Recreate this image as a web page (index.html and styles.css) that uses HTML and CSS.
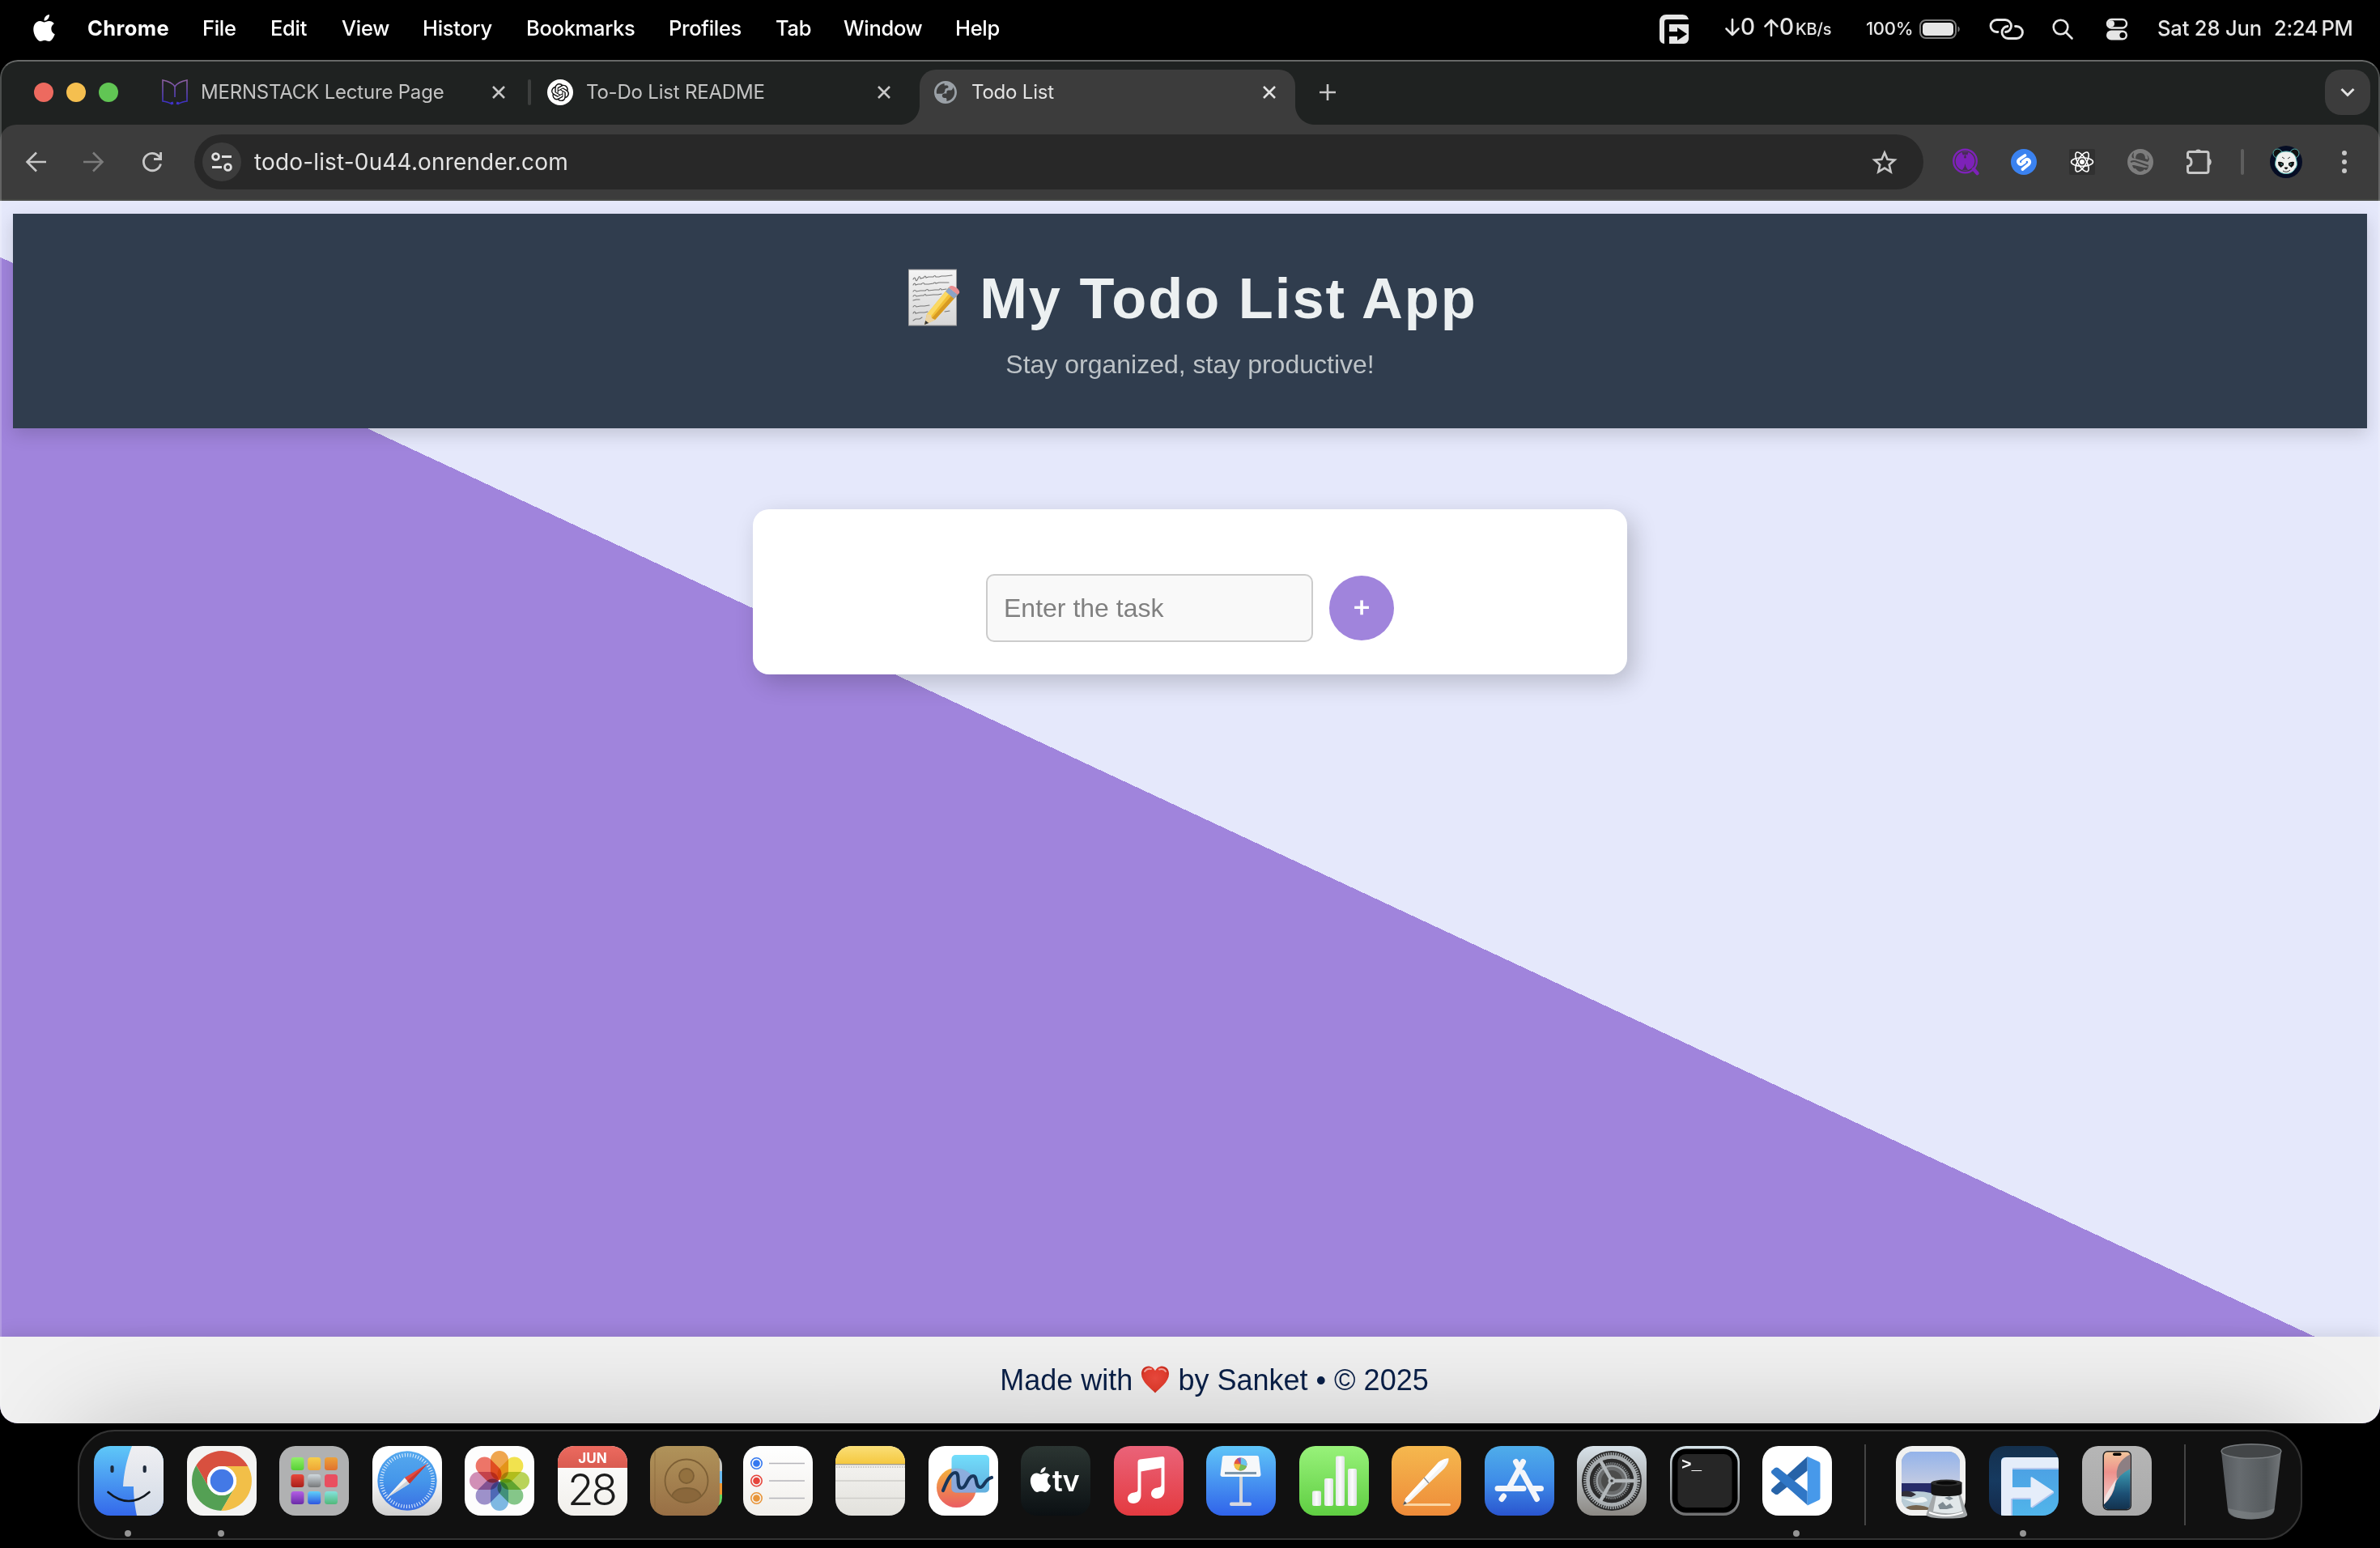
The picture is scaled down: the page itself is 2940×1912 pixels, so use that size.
FILE: index.html
```html
<!DOCTYPE html>
<html lang="en">
<head>
<meta charset="utf-8">
<title>Todo List</title>
<link rel="stylesheet" href="styles.css">
</head>
<body>
<svg class="defs" width="0" height="0" aria-hidden="true">
  <defs>
    <path id="apple" d="M12.152 6.896c-.948 0-2.415-1.078-3.96-1.04-2.04.027-3.91 1.183-4.961 3.014-2.117 3.675-.546 9.103 1.519 12.09 1.013 1.454 2.208 3.09 3.792 3.039 1.52-.065 2.09-.987 3.935-.987 1.831 0 2.35.987 3.96.948 1.637-.026 2.676-1.48 3.676-2.948 1.156-1.688 1.636-3.325 1.662-3.415-.039-.013-3.182-1.221-3.22-4.857-.026-3.04 2.48-4.494 2.597-4.559-1.429-2.09-3.623-2.324-4.39-2.376-2-.156-3.675 1.09-4.61 1.09zM15.53 3.83c.843-1.012 1.4-2.427 1.245-3.83-1.207.052-2.662.805-3.532 1.818-.78.896-1.454 2.338-1.273 3.714 1.338.104 2.715-.688 3.559-1.701"/>
    <clipPath id="tile"><rect width="86" height="86" rx="20"/></clipPath>
    <clipPath id="photo"><rect x="7" y="7" width="72" height="72" rx="14"/></clipPath>
    <clipPath id="screen"><rect x="27" y="7.500" width="32.500" height="70.500" rx="4.500"/></clipPath>
    <linearGradient id="gFinder" x2="0" y2="1"><stop stop-color="#5fc8f8"/><stop offset="1" stop-color="#3468ea"/></linearGradient>
    <linearGradient id="gFace" x2="0" y2="1"><stop stop-color="#efeff2"/><stop offset="1" stop-color="#d3dbe7"/></linearGradient>
    <linearGradient id="gSafariBg" x2="0" y2="1"><stop offset=".4" stop-color="#fff"/><stop offset="1" stop-color="#cfcfcf"/></linearGradient>
    <linearGradient id="gSafari" x2="0" y2="1"><stop stop-color="#55a9ee"/><stop offset=".5" stop-color="#4596ea"/><stop offset="1" stop-color="#3a6fe3"/></linearGradient>
    <linearGradient id="gRed" x2="0" y2="1"><stop stop-color="#ec6a5f"/><stop offset="1" stop-color="#d95b50"/></linearGradient>
    <linearGradient id="gPaper" x2="0" y2="1"><stop stop-color="#fff"/><stop offset="1" stop-color="#f1efeb"/></linearGradient>
    <linearGradient id="gTan" x2="0" y2="1"><stop stop-color="#b0935a"/><stop offset="1" stop-color="#986f45"/></linearGradient>
    <linearGradient id="gNote" x2="0" y2="1"><stop stop-color="#fadf78"/><stop offset="1" stop-color="#f5c83f"/></linearGradient>
    <linearGradient id="gNotePaper" x2="0" y2="1"><stop stop-color="#f9f8f6"/><stop offset="1" stop-color="#e2e1dc"/></linearGradient>
    <linearGradient id="gFree" x2="0" y2="1"><stop stop-color="#f4b23c"/><stop offset="1" stop-color="#ea5d63"/></linearGradient>
    <linearGradient id="gFreeSq" x2="0" y2="1"><stop stop-color="#67dbfb"/><stop offset="1" stop-color="#57a9dc"/></linearGradient>
    <linearGradient id="gTv" x2="0" y2="1"><stop stop-color="#2b3532"/><stop offset="1" stop-color="#0b1013"/></linearGradient>
    <linearGradient id="gMusic" x2="0" y2="1"><stop stop-color="#ea6379"/><stop offset="1" stop-color="#e43a40"/></linearGradient>
    <linearGradient id="gKey" x2="0" y2="1"><stop stop-color="#5fc5f8"/><stop offset="1" stop-color="#3063ea"/></linearGradient>
    <linearGradient id="gNum" x2="0" y2="1"><stop stop-color="#98f27a"/><stop offset="1" stop-color="#5fce42"/></linearGradient>
    <linearGradient id="gPages" x2="0" y2="1"><stop stop-color="#f5b84e"/><stop offset="1" stop-color="#ee8b39"/></linearGradient>
    <linearGradient id="gStore" x2="0" y2="1"><stop stop-color="#4fadea"/><stop offset=".5" stop-color="#3f8de8"/><stop offset="1" stop-color="#2a55cf"/></linearGradient>
    <linearGradient id="gSet" x2="0" y2="1"><stop stop-color="#d8e2ea"/><stop offset="1" stop-color="#8c8984"/></linearGradient>
    <linearGradient id="gBar" x2="1" y2="0"><stop stop-color="#e4e7ea"/><stop offset=".5" stop-color="#fcfcfd"/><stop offset="1" stop-color="#dde1e4"/></linearGradient>
    <linearGradient id="gTerm" x2="0" y2="1"><stop stop-color="#d7e4ea"/><stop offset="1" stop-color="#6f6f70"/></linearGradient>
    <linearGradient id="gSky" x2="0" y2="1"><stop stop-color="#93b3ea"/><stop offset="1" stop-color="#c3cbe2"/></linearGradient>
    <linearGradient id="gF" x2="0" y2="1"><stop stop-color="#4b9de3"/><stop offset="1" stop-color="#51b5ea"/></linearGradient>
    <linearGradient id="gFbg" x2="0" y2="1"><stop stop-color="#14304d"/><stop offset=".5" stop-color="#163a60"/><stop offset="1" stop-color="#14294a"/></linearGradient>
    <linearGradient id="gPh" x2="0" y2="1"><stop stop-color="#b6b6b6"/><stop offset="1" stop-color="#a9a9a9"/></linearGradient>
    <linearGradient id="gWave" x2="0" y2="1"><stop stop-color="#3d9fb5"/><stop offset=".6" stop-color="#1c4f74"/><stop offset="1" stop-color="#122f4a"/></linearGradient>
    <linearGradient id="gPink" x2="0" y2="1"><stop stop-color="#f2c69c"/><stop offset=".35" stop-color="#ee918c"/><stop offset="1" stop-color="#f3dfdc"/></linearGradient>
    <linearGradient id="gTrash" x2="1" y2="0"><stop stop-color="#55595d"/><stop offset=".3" stop-color="#676c70"/><stop offset=".75" stop-color="#565b5e"/><stop offset="1" stop-color="#73777a"/></linearGradient>
    <linearGradient id="gMern" x2="0" y2="1"><stop stop-color="#8c5fa0"/><stop offset="1" stop-color="#3a2fc4"/></linearGradient>
    <linearGradient id="gMemo" x2="0" y2="1"><stop stop-color="#f4f4f4"/><stop offset="1" stop-color="#d6d6d6"/></linearGradient>
    <radialGradient id="gHeart" cx=".5" cy=".45" r=".6"><stop stop-color="#ef4b3f"/><stop offset=".7" stop-color="#e53d2e"/><stop offset="1" stop-color="#bf2518"/></radialGradient>
    <linearGradient id="l1" x2="0" y2="1"><stop stop-color="#92f06a"/><stop offset="1" stop-color="#57cf35"/></linearGradient>
    <linearGradient id="l2" x2="0" y2="1"><stop stop-color="#f6cf4b"/><stop offset="1" stop-color="#efa636"/></linearGradient>
    <linearGradient id="l3" x2="0" y2="1"><stop stop-color="#eca23a"/><stop offset="1" stop-color="#e0712f"/></linearGradient>
    <linearGradient id="l4" x2="0" y2="1"><stop stop-color="#e8473a"/><stop offset="1" stop-color="#a81f19"/></linearGradient>
    <linearGradient id="l5" x2="0" y2="1"><stop stop-color="#d0d9de"/><stop offset="1" stop-color="#76787a"/></linearGradient>
    <linearGradient id="l7" x2="0" y2="1"><stop stop-color="#b35fe4"/><stop offset="1" stop-color="#6a2ba8"/></linearGradient>
    <linearGradient id="l8" x2="0" y2="1"><stop stop-color="#5fd0fa"/><stop offset="1" stop-color="#2d55e0"/></linearGradient>
    <linearGradient id="l9" x2="0" y2="1"><stop stop-color="#85e2dc"/><stop offset="1" stop-color="#51b87a"/></linearGradient>
  </defs>
</svg>

<div class="menubar">
  <svg class="mb-apple" width="27" height="33" viewBox="2 0 20 24" preserveAspectRatio="none"><use href="#apple" fill="#fff"/></svg>
  <span class="mb-app">Chrome</span><span>File</span><span>Edit</span><span>View</span><span>History</span><span>Bookmarks</span><span>Profiles</span><span>Tab</span><span>Window</span><span>Help</span>
  <svg width="36" height="36" viewBox="0 0 36 36" fill="#e6e6e6"><path d="M8 0H28a8 8 0 0 1 8 6H9a3 3 0 0 0-3 3V36a6 6 0 0 1-6-6V8a8 8 0 0 1 8-8z"/><path d="M12 12H36V30a6 6 0 0 1-6 6H12V27h10v5l12-8-12-8v5H12z"/></svg>
  <span class="mb-net">
    <svg width="18" height="24" viewBox="0 0 18 24"><path d="M9 2V21M1.500 13.500 9 21l7.500-7.500"/></svg><b>0</b>
    <svg class="up" width="18" height="24" viewBox="0 0 18 24"><path d="M9 22V3M1.500 10.500 9 3l7.500 7.500"/></svg><b>0</b><small>KB/s</small>
  </span>
  <span class="mb-pct">100%</span>
  <svg width="52" height="26" viewBox="0 0 52 26"><rect x="1" y="2" width="44" height="22" rx="7" fill="none" stroke="#7b7b7b" stroke-width="2"/><rect x="4" y="5" width="38" height="16" rx="4.500" fill="#e6e6e6"/><path d="M47.500 9.500c3 1 3 6 0 7z" fill="#7b7b7b"/></svg>
  <svg width="44" height="26" viewBox="0 0 44 26" fill="none" stroke="#e6e6e6" stroke-width="2.800" stroke-linecap="round"><path d="M11 16.500H9.500a7.500 7.500 0 0 1 0-15H20a7.500 7.500 0 0 1 7.500 7.500c0 4-3 7.300-7 7.500"/><path d="M32.500 9.500H34a7.500 7.500 0 0 1 0 15H23.500A7.500 7.500 0 0 1 16 17c0-4 3-7.300 7-7.500"/></svg>
  <svg width="26" height="26" viewBox="0 0 26 26" fill="none" stroke="#e6e6e6" stroke-width="2.600" stroke-linecap="round"><circle cx="10.500" cy="10.500" r="8.800"/><path d="M17 17l7.500 7.500"/></svg>
  <svg width="28" height="28" viewBox="0 0 28 28"><rect x="2" y="2" width="24" height="10.500" rx="5.250" fill="none" stroke="#e6e6e6" stroke-width="2.400"/><circle cx="7" cy="7.200" r="4" fill="#e6e6e6"/><rect x="1" y="15.500" width="26" height="12" rx="6" fill="#e6e6e6"/><circle cx="21" cy="21.500" r="3.600" fill="#000"/></svg>
  <span class="mb-date">Sat 28 Jun</span><span class="mb-time">2:24&#8201;PM</span>
</div>

<div class="window">
  <div class="tabstrip">
    <div class="lights"><i class="red"></i><i class="yellow"></i><i class="green"></i></div>
    <div class="tab tab-1">
      <svg width="32" height="32" viewBox="0 0 32 32" fill="none" stroke="url(#gMern)" stroke-width="1.600"><path d="M16 22V9Q12 3 1 1V27Q8 28 11 30M16 9Q20 3 31 1V27Q24 28 21 30"/><path d="M11 30l3-1M21 30l-3-1" stroke="#4134cc" stroke-width="3"/></svg>
      <span>MERNSTACK Lecture Page</span>
      <svg class="close" width="18" height="18" viewBox="0 0 18 18"><path d="M2 2l14 14M16 2 2 16"/></svg>
    </div>
    <i class="tab-sep"></i>
    <div class="tab tab-2">
      <svg width="32" height="32" viewBox="0 0 32 32"><circle cx="16" cy="16" r="16" fill="#fff"/><g transform="translate(5 5) scale(.92)"><path fill="#111" d="M22.2819 9.8211a5.9847 5.9847 0 0 0-.5157-4.9108 6.0462 6.0462 0 0 0-6.5098-2.9A6.0651 6.0651 0 0 0 4.9807 4.1818a5.9847 5.9847 0 0 0-3.9977 2.9 6.0462 6.0462 0 0 0 .7427 7.0966 5.98 5.98 0 0 0 .511 4.9107 6.051 6.051 0 0 0 6.5146 2.9001A5.9847 5.9847 0 0 0 13.2599 24a6.0557 6.0557 0 0 0 5.7718-4.2058 5.9894 5.9894 0 0 0 3.9977-2.9001 6.0557 6.0557 0 0 0-.7475-7.0729zm-9.022 12.6081a4.4755 4.4755 0 0 1-2.8764-1.0408l.1419-.0804 4.7783-2.7582a.7948.7948 0 0 0 .3927-.6813v-6.7369l2.02 1.1686a.071.071 0 0 1 .038.052v5.5826a4.504 4.504 0 0 1-4.4945 4.4944zm-9.6607-4.1254a4.4708 4.4708 0 0 1-.5346-3.0137l.142.0852 4.783 2.7582a.7712.7712 0 0 0 .7806 0l5.8428-3.3685v2.3324a.0804.0804 0 0 1-.0332.0615L9.74 19.9502a4.4992 4.4992 0 0 1-6.1408-1.6464zM2.3408 7.8956a4.485 4.485 0 0 1 2.3655-1.9728V11.6a.7664.7664 0 0 0 .3879.6765l5.8144 3.3543-2.0201 1.1685a.0757.0757 0 0 1-.071 0l-4.8303-2.7865A4.504 4.504 0 0 1 2.3408 7.872zm16.5963 3.8558L13.1038 8.364 15.1192 7.2a.0757.0757 0 0 1 .071 0l4.8303 2.7913a4.4944 4.4944 0 0 1-.6765 8.1042v-5.6772a.79.79 0 0 0-.407-.667zm2.0107-3.0231l-.142-.0852-4.7735-2.7818a.7759.7759 0 0 0-.7854 0L9.409 9.2297V6.8974a.0662.0662 0 0 1 .0284-.0615l4.8303-2.7866a4.4992 4.4992 0 0 1 6.6802 4.66zM8.3065 12.863l-2.02-1.1638a.0804.0804 0 0 1-.038-.0567V6.0742a4.4992 4.4992 0 0 1 7.3757-3.4537l-.142.0805L8.704 5.459a.7948.7948 0 0 0-.3927.6813zm1.0976-2.3654l2.602-1.4998 2.6069 1.4998v2.9994l-2.5974 1.4997-2.6067-1.4997Z"/></g></svg>
      <span>To-Do List README</span>
      <svg class="close" width="18" height="18" viewBox="0 0 18 18"><path d="M2 2l14 14M16 2 2 16"/></svg>
    </div>
    <div class="tab tab-active">
      <svg width="28" height="28" viewBox="2 2 20 20" fill="#9aa0a6"><path d="M12 2C6.480 2 2 6.480 2 12s4.480 10 10 10 10-4.480 10-10S17.520 2 12 2zM4 12c0-.6.1-1 .2-1.300H8.500c1.700 0 3 1.300 3 3 0 1.300 1 2 2 2 .6 0 1 .4 1 1 0 .9-.7 1.300-1.500 1.300H11v1.900C7 19.500 4 16 4 12zm14.500 4.700c.3-1.700-1-3-2.500-3H14.500c-1 0-1.500-.7-1.500-1.500V11h-2c-1.100 0-2-.9-2-2s.9-2 2-2h1c.6 0 1-.5 1-1V4.100c4 .5 7 3.900 7 7.900 0 1.700-.5 3.400-1.500 4.700z" fill-rule="evenodd" transform="translate(0 24) scale(1 -1)"/></svg>
      <span>Todo List</span>
      <svg class="close" width="18" height="18" viewBox="0 0 18 18"><path d="M2 2l14 14M16 2 2 16"/></svg>
    </div>
    <svg class="newtab" width="22" height="22" viewBox="0 0 22 22"><path d="M11 1V21M1 11H21"/></svg>
    <div class="tabmenu"><svg width="20" height="14" viewBox="0 0 20 14" fill="none" stroke="#e3e3e3" stroke-width="3"><path d="M2.500 3 10 10.500 17.500 3"/></svg></div>
  </div>

  <div class="toolbar">
    <svg width="26" height="26" viewBox="0 0 26 26" fill="none" stroke="#c7c7c7" stroke-width="2.600"><path d="M26 13H2.500M14 1.500 2.500 13 14 24.500"/></svg>
    <svg width="26" height="26" viewBox="0 0 26 26" fill="none" stroke="#7c7c7c" stroke-width="2.600"><path d="M0 13H23.500M12 1.500 23.500 13 12 24.500"/></svg>
    <svg width="26" height="26" viewBox="0 0 26 26" fill="none" stroke="#c7c7c7" stroke-width="2.800"><path d="M23.500 15.500A10.700 10.700 0 1 1 21 5.800L23.500 8.500M23.600 1V9.500H15"/></svg>
    <div class="omnibox">
      <div class="tune"><svg width="26" height="24" viewBox="0 0 26 24" fill="none" stroke="#e0e0e0" stroke-width="2.800"><circle cx="5.500" cy="5.500" r="3.900"/><path d="M13 5.500H25M1 18.500H13"/><circle cx="20.500" cy="18.500" r="3.900"/></svg></div>
      <span class="url">todo-list-0u44.onrender.com</span>
      <svg class="star" width="32" height="30" viewBox="0 0 32 30" fill="none" stroke="#c7c7c7" stroke-width="2.600"><path d="M16 3.500l3.500 8.300 9 .8-6.800 5.900 2 8.800L16 22.600l-7.700 4.700 2-8.800-6.800-5.900 9-.8z"/></svg>
    </div>
    <div class="extensions">
      <svg width="34" height="34" viewBox="0 0 34 34"><circle cx="16.500" cy="16" r="14.300" fill="none" stroke="#7d22b8" stroke-width="2.400"/><circle cx="16.500" cy="16" r="11.800" fill="#7d22b8"/><path d="M27 26l4.500 5" stroke="#7d22b8" stroke-width="4.500" stroke-linecap="round"/><path d="M12.500 5l1.500 4 1.500-2 .5 3h1l.5-3 1.500 2 1.500-4zM16.500 19l-1 4-2.500 4h7l-2.500-4z" fill="#472a58"/><circle cx="16.500" cy="11" r="1.500" fill="#472a58"/></svg>
      <svg width="34" height="34" viewBox="0 0 34 34"><circle cx="17" cy="17" r="16" fill="#3b82f0"/><path d="M18.500 9l-7 4.800c-3.500 3 0 7.700 3.500 5.500l3-2.200M15.500 26l7.500-6c3-3.500-.5-8-4-5.500L16 16.800" fill="none" stroke="#fff" stroke-width="3.800" stroke-linecap="round"/></svg>
      <svg width="34" height="34" viewBox="0 0 34 34"><rect x="1" y="1" width="32" height="32" rx="2" fill="#313131"/><g fill="none" stroke="#fff" stroke-width="1.600"><ellipse cx="17" cy="17" rx="13.500" ry="5.200"/><ellipse cx="17" cy="17" rx="13.500" ry="5.200" transform="rotate(60 17 17)"/><ellipse cx="17" cy="17" rx="13.500" ry="5.200" transform="rotate(120 17 17)"/></g><circle cx="17" cy="17" r="3" fill="#fff"/></svg>
      <svg width="34" height="34" viewBox="0 0 34 34"><circle cx="17" cy="17" r="16" fill="#7d7d7d"/><path d="M11 13q0-7 6-7t6 7l3 1q1-2-1-6 5 5 1 9L7 12q-2-3 2-7-1 4 0 7zM9 21l13 3q4 0 5-1-2 6-5 3-2 3-5 3t-6-4q-3 1-4-4z" fill="#444"/><path d="M5 17q4-2 8 0l14 5" stroke="#444" stroke-width="2" fill="none"/></svg>
      <svg width="34" height="34" viewBox="0 0 34 34"><path d="M5.500 4.500H27A2 2 0 0 1 29 6.500V28A2.500 2.500 0 0 1 26.500 30.500H6A2.500 2.500 0 0 1 3.500 28V22.500a5.600 5.600 0 0 0 0-11V6.500a2 2 0 0 1 2-2z" fill="none" stroke="#c7c7c7" stroke-width="3"/><path d="M12.500 4a4.500 4.500 0 0 1 8 0zM30 12.500a5 5 0 0 1 0 9z" fill="#c7c7c7"/></svg>
    </div>
    <i class="tb-sep"></i>
    <svg class="avatar" width="40" height="40" viewBox="0 0 40 40"><circle cx="20" cy="20" r="20" fill="#060d24"/><g stroke="#58b8b4" stroke-width="1"><circle cx="9.500" cy="9.500" r="5.500" fill="#111"/><circle cx="30.500" cy="9.500" r="5.500" fill="#111"/><path d="M20 7c8 0 12 5 12.500 10 1 4 2 8-2 12-2 4-6.500 5.500-10.500 5.500S11.500 33 9.500 29c-4-4-3-8-2-12C8 12 12 7 20 7z" fill="#eef0ee"/></g><path d="M10 20q4-1 7 1.500v2.500l-3.500 3-3-3zM30 20q-4-1-7 1.500v2.500l3.500 3 3-3zM17.500 27.500l2.500 2 2.500-2-1-1h-3z" fill="#111"/><path d="M16 31q5 3 9-1M15 14l3 2M25 14l-3 2" fill="none" stroke="#333" stroke-width="1"/><path d="M13.500 22.500l2 .8M26.500 22.500l-2 .8" stroke="#4fb5b3" stroke-width="1.100"/></svg>
    <svg class="kebab" width="6" height="28" viewBox="0 0 6 28" fill="#c7c7c7"><circle cx="3" cy="3" r="3"/><circle cx="3" cy="14" r="3"/><circle cx="3" cy="25" r="3"/></svg>
  </div>

  <div class="page">
    <header class="hero">
      <h1><svg width="66" height="72" viewBox="0 0 66 72"><rect x=".5" y="1" width="59" height="69" fill="url(#gMemo)" stroke="#9b9b9b"/><g fill="none" stroke="#777" stroke-width="1.100" stroke-linecap="round"><path d="M6 13q2-4 3 0t3-1 3 0l4-1q2-4 3 0l3-1 6 0q2-3 3 0l4 0 3-1 5 0 8-1"/><path d="M6 20q2-4 3 0l3-1 4 0q3-3 4 0l5 0 6-1q2-2 3 0l4-1 6 0 6 0"/><path d="M6 28q2-3 4 0l5-1 6 0q3-3 4 0l8-1 5 0q2-3 3 0l6-1"/><path d="M6 34q2-3 4 0l6-1 3 0q2-3 3 0l9-1 6 0 4-1"/><path d="M6 39l4-1 4 0M6 47q2-3 4 0l5-1 5 0 6-1"/><path d="M6 55q2-4 3 0l5-1 6 0 4-1M45 53l6-1M6 64l3-2 5 0 3-2"/></g><path d="M20 69l3-13L50 23l11 9-28 31z" fill="#f2bf35"/><path d="M23 56L50 23l4 3-27 34z" fill="#fbd963"/><path d="M33 63l28-31-4-3-28 32z" fill="#d79a22"/><path d="M23 56l5 1 1 4 4 2-13 6z" fill="#ecd3a0"/><path d="M20 69l1.200-5 4 3z" fill="#333"/><path d="M46 28l4-5 11 9-4.500 5z" fill="#8ba3c7"/><path d="M50 23c2-3 5-2 7-1 4 2 7 5 6 8l-2 2z" fill="#ea8f92"/></svg><span>My Todo List App</span></h1>
      <p>Stay organized, stay productive!</p>
    </header>
    <main class="card">
      <div class="task-row">
        <input type="text" placeholder="Enter the task">
        <button type="button">+</button>
      </div>
    </main>
    <footer class="credit"><p>Made with <svg width="36" height="34" viewBox="0 0 36 34"><path d="M18 33.500C13 28 1 20 1 10 1 4 5 .6 9.500 .6c4 0 7 2.400 8.500 5.600C19.500 3 22.500.6 26.500.6 31 .6 35 4 35 10c0 10-12 18-17 23.500z" fill="url(#gHeart)"/><path d="M5 7q3-4.500 8-3M23 4.500q5-1.500 8 2.500" stroke="#f8a59c" stroke-width="2" fill="none" stroke-linecap="round"/></svg> by Sanket • © 2025</p></footer>
  </div>
</div>

<div class="dock-area">
<div class="dock">
  <div class="app running"><svg viewBox="0 0 86 86"><g clip-path="url(#tile)"><rect width="86" height="86" fill="url(#gFinder)"/><path d="M47 0C40 18 37 34 36 50H49C49 64 51 76 53 86H86V0z" fill="url(#gFace)"/></g><path d="M22.500 26V31M62.700 26V31" stroke="#1e2a3b" stroke-width="4.200" stroke-linecap="round"/><path d="M17.500 57Q43 79 68.500 57" fill="none" stroke="#111820" stroke-width="2.600" stroke-linecap="round"/></svg></div>
  <div class="app running"><svg viewBox="0 0 86 86"><rect width="86" height="86" rx="20" fill="#f3f3f2"/><path d="M75.300 25A37 37 0 0 0 11.250 24L27.400 52A18 18 0 0 1 43 25Z" fill="#d8503f"/><path d="M11.250 24A37 37 0 0 0 42.400 80L58.600 52A18 18 0 0 1 27.400 52Z" fill="#54a054"/><path d="M42.400 80A37 37 0 0 0 75.300 25H43A18 18 0 0 1 58.600 52Z" fill="#f2bf48"/><circle cx="43" cy="43" r="18" fill="#fff"/><circle cx="43" cy="43" r="14.300" fill="#4379e6"/></svg></div>
  <div class="app"><svg viewBox="0 0 86 86"><rect width="86" height="86" rx="20" fill="#b0b1b2"/><rect x="14.500" y="14" width="16" height="16" rx="3.500" fill="url(#l1)"/><rect x="35.200" y="14" width="16" height="16" rx="3.500" fill="url(#l2)"/><rect x="56" y="14" width="16" height="16" rx="3.500" fill="url(#l3)"/><rect x="14.500" y="35" width="16" height="16" rx="3.500" fill="url(#l4)"/><rect x="35.200" y="35" width="16" height="16" rx="3.500" fill="url(#l5)"/><rect x="56" y="35" width="16" height="16" rx="3.500" fill="#e94f60"/><rect x="14.500" y="56" width="16" height="16" rx="3.500" fill="url(#l7)"/><rect x="35.200" y="56" width="16" height="16" rx="3.500" fill="url(#l8)"/><rect x="56" y="56" width="16" height="16" rx="3.500" fill="url(#l9)"/></svg></div>
  <div class="app"><svg viewBox="0 0 86 86"><rect width="86" height="86" rx="20" fill="url(#gSafariBg)"/><circle cx="43" cy="43" r="36.700" fill="url(#gSafari)"/><circle cx="43" cy="43" r="31.800" fill="none" stroke="#e6f1fc" stroke-width="4.500" stroke-dasharray="1 2.330"/><path d="M68.500 21.500L39.800 39.200l6.200 7.300z" fill="#e5493d"/><path d="M17 64.500L39.800 39.200l6.200 7.300z" fill="#f4f4f4"/><path d="M17 64.500L42.900 42.900l3.100 3.600z" fill="#cfd2d6"/><path d="M68.500 21.500L42.900 42.900l3.100 3.600z" fill="#c23a33"/></svg></div>
  <div class="app"><svg viewBox="0 0 86 86"><rect width="86" height="86" rx="20" fill="#fdfdfd"/><g class="petals"><rect x="32" y="6" width="22" height="36" rx="11" fill="#f0a040"/><rect x="32" y="6" width="22" height="36" rx="11" fill="#f2e23f" transform="rotate(45 43 43)"/><rect x="32" y="6" width="22" height="36" rx="11" fill="#b5d24c" transform="rotate(90 43 43)"/><rect x="32" y="6" width="22" height="36" rx="11" fill="#7cc380" transform="rotate(135 43 43)"/><rect x="32" y="6" width="22" height="36" rx="11" fill="#74b4e2" transform="rotate(180 43 43)"/><rect x="32" y="6" width="22" height="36" rx="11" fill="#9689c8" transform="rotate(225 43 43)"/><rect x="32" y="6" width="22" height="36" rx="11" fill="#cf87b2" transform="rotate(270 43 43)"/><rect x="32" y="6" width="22" height="36" rx="11" fill="#ee6a5c" transform="rotate(315 43 43)"/></g></svg></div>
  <div class="app"><svg viewBox="0 0 86 86"><g clip-path="url(#tile)"><rect width="86" height="86" fill="url(#gPaper)"/><rect width="86" height="27" fill="url(#gRed)"/></g><text x="43" y="21" class="cal-month">JUN</text><text x="41.500" y="73" class="cal-day">28</text></svg></div>
  <div class="app"><svg viewBox="0 0 86 86"><path d="M78 11q11 2 11 14v7H78z" fill="#c9c9c4"/><path d="M78 31h11v15H78z" fill="#6cbcf0"/><path d="M78 46h11v14H78z" fill="#f0962f"/><path d="M78 60h11v4q0 10-11 13z" fill="#66d45f"/><rect width="86" height="86" rx="20" fill="url(#gTan)"/><path d="M6 6V80" stroke="#8d6c3e" stroke-width="1.500" opacity=".6"/><g stroke="#7d5f35" stroke-width="1.800"><circle cx="45" cy="43" r="26.500" fill="none"/><circle cx="45" cy="37" r="9" fill="#93713f"/><path d="M27 62Q30 52 45 52t18 10Q56 70 45 70T27 62z" fill="#8a673b"/></g></svg></div>
  <div class="app"><svg viewBox="0 0 86 86"><rect width="86" height="86" rx="20" fill="url(#gPaper)"/><g fill="none" stroke-width="1.600"><circle cx="16.500" cy="21.500" r="6.700" stroke="#3478f0"/><circle cx="16.500" cy="43" r="6.700" stroke="#e6453c"/><circle cx="16.500" cy="64.500" r="6.700" stroke="#e8953a"/><path d="M32 21.500H76M32 43H76M32 64.500H76" stroke="#b5b5ba"/></g><circle cx="16.500" cy="21.500" r="4.300" fill="#3478f0"/><circle cx="16.500" cy="43" r="4.300" fill="#e6453c"/><circle cx="16.500" cy="64.500" r="4.300" fill="#e8953a"/></svg></div>
  <div class="app"><svg viewBox="0 0 86 86"><g clip-path="url(#tile)"><rect width="86" height="86" fill="url(#gNotePaper)"/><rect width="86" height="22" fill="url(#gNote)"/><path d="M0 22.700H86" stroke="#a79f8a" stroke-width="1.600"/><path d="M1 26H86" stroke="#bdbbb5" stroke-width="1.500" stroke-dasharray="1.500 1.500"/><path d="M0 43H86M0 64.500H86" stroke="#cfceca" stroke-width="1.400"/></g></svg></div>
  <div class="app"><svg viewBox="0 0 86 86"><rect width="86" height="86" rx="20" fill="#fff"/><circle cx="34.500" cy="51.500" r="24.500" fill="url(#gFree)"/><rect x="28.500" y="11" width="46.500" height="46.500" rx="5" fill="url(#gFreeSq)" opacity=".93"/><path d="M28.500 28.500A24.500 24.500 0 0 1 58.500 57.500H33.500a5 5 0 0 1-5-5z" fill="#9ba5dc" opacity=".7"/><path d="M18 55C22 45 27 33 33 33c7 0 0 19 8 19 6 0 7-15 14-15 6 0 2 14 9 14 5 0 5-10 14-12" fill="none" stroke="#17375c" stroke-width="4.200" stroke-linecap="round"/></svg></div>
  <div class="app"><svg viewBox="0 0 86 86"><rect width="86" height="86" rx="20" fill="url(#gTv)"/><g transform="translate(9 26) scale(1.290)"><use href="#apple" fill="#fff"/></g><text x="39" y="56" class="tv-text">tv</text></svg></div>
  <div class="app"><svg viewBox="0 0 86 86"><rect width="86" height="86" rx="20" fill="url(#gMusic)"/><path d="M29.500 19.500Q29.500 17 32 16.500L60 13Q62.500 12.800 62.500 15.500V55c0 6-4 10-9.500 10-4 0-7-2.500-7-6 0-4 3-7 8-7.500 3-.4 4.500-1 4.500-4V27L33.500 31.500V61c0 6-4 10-9.500 10-4.500 0-7-3-7-6 0-4 3-7 8-7.500 3-.4 4.500-1 4.500-4z" fill="#fff"/></svg></div>
  <div class="app"><svg viewBox="0 0 86 86"><rect width="86" height="86" rx="20" fill="url(#gKey)"/><path d="M41 37h4V70h-4z" fill="#cfd5dc"/><rect x="29" y="69.500" width="27" height="4.500" rx="2" fill="#d8d8e0"/><path d="M22 12H63a2 2 0 0 1 2 1.700L67.500 35a2.500 2.500 0 0 1-2.500 3H20a2.500 2.500 0 0 1-2.500-3L20 13.700A2 2 0 0 1 22 12z" fill="#f6f8fa"/><path d="M23 33.500H62" stroke="#7d96ab" stroke-width="3"/><circle cx="42.500" cy="22.500" r="8" fill="#e5573f"/><path d="M42.500 22.500V14.500a8 8 0 0 1 7.500 10.500z" fill="#69c5f0"/><path d="M42.500 22.500l7.500 2.500a8 8 0 0 1-10 5z" fill="#74c05c"/><path d="M42.500 22.500l-2.500 7.500a8 8 0 0 1-5.500-8z" fill="#f0c344"/><path d="M42.500 22.500L38 15.800a8 8 0 0 1 4.500-1.300z" fill="#8c4fb0"/></svg></div>
  <div class="app"><svg viewBox="0 0 86 86"><rect width="86" height="86" rx="20" fill="url(#gNum)"/><g fill="url(#gBar)"><rect x="16" y="55.500" width="11" height="18.500" rx="2"/><rect x="31" y="40" width="11" height="34" rx="2"/><rect x="45" y="12.500" width="11" height="61.500" rx="2"/><rect x="60" y="28" width="11" height="46" rx="2"/></g></svg></div>
  <div class="app"><svg viewBox="0 0 86 86"><rect width="86" height="86" rx="20" fill="url(#gPages)"/><rect x="15" y="71" width="58" height="3" rx="1.500" fill="#fbd5a2"/><path d="M14 73l3-8L58 20q7-5 12.500-4.500Q71 21 65 28L22 69z" fill="#f3f4f5"/><path d="M17 65L58 20q7-5 12.500-4.500L20 67z" fill="#fff"/><path d="M14 73l2-5 3 3z" fill="#555"/><path d="M40 39l6 7" stroke="#8f9295" stroke-width="1.500"/></svg></div>
  <div class="app"><svg viewBox="0 0 86 86"><rect width="86" height="86" rx="20" fill="url(#gStore)"/><g stroke="#f4f6fa" stroke-width="7" stroke-linecap="round"><path d="M16 52.500H48M58 52.500H69.500M38.500 19.500L42 26M47 33L64.500 65.500M47.500 19.500L30.500 51M23.500 62L21 65.500"/></g></svg></div>
  <div class="app"><svg viewBox="0 0 86 86"><rect width="86" height="86" rx="20" fill="url(#gSet)"/><circle cx="43" cy="43" r="37" fill="#2b2b2b"/><circle cx="43" cy="43" r="33" fill="none" stroke="#a5aaad" stroke-width="4" stroke-dasharray="1.500 1.400"/><circle cx="43" cy="43" r="29.500" fill="none" stroke="#a9aeb1" stroke-width="4.500"/><circle cx="43" cy="43" r="21.500" fill="none" stroke="#85898c" stroke-width="2.500" stroke-dasharray="1.500 1.100"/><circle cx="43" cy="43" r="18.500" fill="#6a6c6d" stroke="#9a9fa2" stroke-width="2.500"/><circle cx="43" cy="43" r="13" fill="#4c4c4b"/><path d="M43 43H72M43 43L29 18M43 43L29 68" stroke="#b3b8bb" stroke-width="4.500"/><circle cx="43" cy="43" r="4.500" fill="#b3b8bb"/><circle cx="43" cy="43" r="1.800" fill="#333"/></svg></div>
  <div class="app"><svg viewBox="0 0 86 86"><rect width="86" height="86" rx="20" fill="url(#gTerm)"/><rect x="2.500" y="3.500" width="81" height="79" rx="17.500" fill="#000"/><rect x="9.500" y="10" width="67" height="66" rx="10" fill="#262626"/><text x="14" y="29" class="term-text">&gt;_</text></svg></div>
  <div class="app running"><svg viewBox="0 0 86 86"><rect width="86" height="86" rx="20" fill="#fff"/><path d="M55.700 13L11.600 53q-1.500 2 0 3.500l4 3q2 1 4 0L55.700 30.500z" fill="#2763a8"/><path d="M19.600 27q-2-1-4 0l-4 3.500q-1.500 1.500 0 3.500L55.700 73V56z" fill="#3077c6"/><path d="M55.700 13L70 19.500q1.500.8 1.500 2.500V64q0 2-1.500 2.800L55.700 73.500z" fill="#4799ea"/></svg></div>
  <i class="dock-sep sep-1"></i>
  <div class="app"><svg viewBox="0 0 86 86"><rect width="86" height="86" rx="20" fill="#f1f1f0"/><g clip-path="url(#photo)"><rect x="7" y="7" width="72" height="72" fill="#8ba3bb"/><rect x="7" y="7" width="72" height="40" fill="url(#gSky)"/><rect x="7" y="46" width="72" height="13" fill="#272c69"/><path d="M7 58q20-4 36 0t36 2v19H7z" fill="#b9ccd6"/><path d="M7 57q8-4 18 3l-6 3-12-1z" fill="#332f38"/><path d="M7 64q10 3 20 0t12 4q-10 4-20 1z" fill="#edf3f5"/><path d="M7 79q8-6 18-6t22 6z" fill="#75634e"/></g><path d="M46 60H80l8 24q2 5-18 5.500Q36 90 37.500 84z" fill="#a4a8aa"/><path d="M50 60H77l5 20q-12 6-36 1z" fill="#e1e7e9"/><path d="M52 73l6-4 4 5 5-3 4 5-8 2-9 0zM60 64l6-2 5 3-5 2z" fill="#7f8b92"/><path d="M41 82q20 8 42 0" stroke="#fff" stroke-width="2" fill="none"/><path d="M43.500 45V58q0 4 19 4t19-4V45z" fill="#141414"/><ellipse cx="62.500" cy="45.500" rx="19" ry="4" fill="#2d2d2d"/><ellipse cx="62.500" cy="45.500" rx="13" ry="2.300" fill="#090909"/></svg></div>
  <div class="app running"><svg viewBox="0 0 86 86"><g clip-path="url(#tile)"><rect width="86" height="86" fill="url(#gFbg)"/><path d="M15 86V19q0-5 5-5H86V86z" fill="url(#gF)"/><path d="M15 86V20q0-6 6-6H86V28H29V51H51.500V39.500q0-2 1.800-1L79 55.500q1.800 1.500 0 3L53.300 75.500q-1.800 1-1.800-1V65H29V86z" fill="#e5edfa"/><path d="M29 28H86M29 65H51.500M28 65V86M53 76L79.500 57.500" stroke="#b6c8ee" stroke-width="2" fill="none"/></g></svg></div>
  <div class="app app-phone"><svg viewBox="0 0 86 86"><rect width="86" height="86" rx="20" fill="url(#gPh)"/><rect x="25.500" y="6" width="35.500" height="73.500" rx="6" fill="#1d2023"/><g clip-path="url(#screen)"><rect x="27" y="7" width="33" height="72" fill="url(#gPink)"/><path d="M60 10Q40 20 43 40L60 34z" fill="#8d7f83"/><path d="M60 28Q44 36 41 47 39 62 26 73V80H60z" fill="url(#gWave)"/><path d="M42 41Q40 58 27 72 25 66 36 50z" fill="#f0e3e2"/></g><rect x="38" y="8.500" width="10.500" height="3.500" rx="1.700" fill="#000"/></svg></div>
  <i class="dock-sep sep-2"></i>
  <div class="trash"><svg width="76" height="96" viewBox="0 0 76 96"><path d="M1 10L9 82q1 11 29 11.500Q65 93 66.500 82L75 10z" fill="url(#gTrash)"/><path d="M9.500 80q1 13 28.500 13.500Q65 93 66.500 80 50 86 38 85T9.500 80z" fill="#83888b" opacity=".55"/><ellipse cx="38" cy="9.500" rx="37" ry="8.800" fill="#434648" stroke="#787c7f" stroke-width="1.400"/></svg></div>
</div>
</div>
</body>
</html>
```

FILE: styles.css
```css
* { box-sizing: border-box; }
html, body { margin: 0; padding: 0; }
body {
  width: 2940px;
  height: 1912px;
  overflow: hidden;
  background: #000;
  font-family: Inter, "Liberation Sans", sans-serif;
  display: flex;
  flex-direction: column;
}
svg { display: block; flex: none; overflow: visible; }
.defs { position: absolute; }

/* macOS menu bar */
.menubar {
  height: 74px;
  flex: none;
  padding: 0 0 3px 41px;
  display: grid;
  grid-template-columns: 67px 142px 84px 88px 100px 128px 176px 132px 84px 138px 870px 81px 174px 66px 86px 78px 66px 64px 144px 1fr;
  align-items: center;
  color: #fff;
  font-size: 25.5px;
  font-weight: 500;
  letter-spacing: -0.3px;
  white-space: nowrap;
}
.menubar span { margin-top: -2px; }
.mb-apple { margin-bottom: 3px; }
.menubar .mb-app { font-weight: 700; letter-spacing: 0.4px; }
.mb-net { display: flex; align-items: baseline; color: #e6e6e6; line-height: 34px; }
.mb-net svg { fill: none; stroke: #e6e6e6; stroke-width: 2.6; stroke-linecap: round; stroke-linejoin: round; align-self: center; margin-top: -2px; }
.mb-net .up { margin-left: 10px; }
.mb-net b { width: 20px; font-size: 28px; font-weight: 500; text-align: center; }
.mb-net small { font-size: 20px; letter-spacing: -0.2px; margin-left: 1px; }
.mb-pct { font-size: 22px; color: #e6e6e6; }
.mb-date, .mb-time { color: #e6e6e6; }
.menubar .mb-date { letter-spacing: -0.15px; }

/* Browser window */
.window {
  position: relative;
  height: 1684px;
  flex: none;
  display: flex;
  flex-direction: column;
  border-radius: 22px;
  overflow: hidden;
  background: #1f2221;
}
.window::after {
  content: "";
  position: absolute;
  inset: 0;
  border: 2px solid rgba(255, 255, 255, .2);
  border-top-color: rgba(255, 255, 255, .32);
  border-bottom-color: transparent;
  border-radius: 22px;
  pointer-events: none;
}
.tabstrip {
  height: 80px;
  flex: none;
  padding: 2px 12px 2px 42px;
  display: flex;
  align-items: center;
  color: #c3c3c3;
  font-size: 24px;
  letter-spacing: -0.2px;
  white-space: nowrap;
}
.lights { display: flex; gap: 16px; width: 158px; }
.lights i { width: 24px; height: 24px; border-radius: 50%; }
.red { background: #ed6a5f; }
.yellow { background: #f5bf4f; }
.green { background: #61c554; }
.tab { display: flex; align-items: center; }
.tab span { flex: 1; margin-top: -1px; }
.close path, .newtab path { fill: none; stroke: #c7c7c7; stroke-width: 2.6; }
.tab-1 { width: 425px; gap: 16px; }
.tab-sep { width: 4px; height: 32px; margin: 0 20px 0 27px; border-radius: 2px; background: #3d3f3e; }
.tab-2 { width: 425px; gap: 16px; margin-right: 35px; }
.tab-active {
  position: relative;
  width: 464px;
  height: 68px;
  padding: 0 23px 12px 18px;
  gap: 18px;
  align-self: flex-end;
  margin-bottom: -2px;
  border-radius: 20px 20px 0 0;
  background: #3c3c3c;
  color: #e3e3e3;
}
.tab-active .close path { stroke: #e3e3e3; }
.tab-active::before, .tab-active::after {
  content: "";
  position: absolute;
  bottom: 0;
  width: 24px;
  height: 24px;
}
.tab-active::before { left: -24px; background: radial-gradient(circle at 0 0, transparent 23.5px, #3c3c3c 24.5px); }
.tab-active::after { right: -24px; background: radial-gradient(circle at 100% 0, transparent 23.5px, #3c3c3c 24.5px); }
.newtab { margin-left: 29px; }
.tabmenu {
  width: 56px;
  height: 56px;
  margin-left: auto;
  border-radius: 20px;
  background: #3c3c3c;
  display: flex;
  align-items: center;
  justify-content: center;
}

.toolbar {
  height: 94px;
  flex: none;
  padding: 0 41px 0 31px;
  display: flex;
  align-items: center;
  gap: 46px;
  background: #3c3c3c;
  border-bottom: 2px solid #484a47;
  border-radius: 20px 20px 0 0;
}
.omnibox {
  width: 2136px;
  height: 68px;
  margin-left: -7px;
  padding: 0 32px 0 10px;
  display: flex;
  align-items: center;
  border-radius: 34px;
  background: #282828;
}
.tune {
  width: 48px;
  height: 48px;
  border-radius: 50%;
  background: #3c3c3c;
  display: flex;
  align-items: center;
  justify-content: center;
}
.url { flex: 1; margin-left: 16px; font-size: 28px; letter-spacing: 0.15px; color: #e3e3e3; white-space: nowrap; }
.extensions { display: flex; gap: 38px; margin-left: -11px; }
.tb-sep { width: 4px; height: 32px; margin-left: -11px; border-radius: 2px; background: #5e5e5e; }
.avatar { margin-left: -14px; }
.kebab { margin-left: 3px; }

/* Todo page */
.page {
  flex: 1;
  padding-top: 16px;
  display: flex;
  flex-direction: column;
  background: linear-gradient(25deg, #a084dc 50%, #e5e8fb 50%);
  font-family: "Liberation Sans", Arial, sans-serif;
}
.hero {
  height: 265px;
  margin: 0 16px;
  padding-top: 65px;
  background: #303d4e;
  box-shadow: 0 8px 20px rgba(0, 0, 0, .15);
  text-align: center;
}
.hero h1 {
  margin: 0;
  padding-left: 7px;
  display: flex;
  justify-content: center;
  gap: 22px;
  font-size: 70.4px;
  line-height: 80px;
  letter-spacing: 2px;
  color: #ecf0f1;
}
.hero h1 svg { margin-top: 3px; }
.hero p { margin: 23px 0 0; font-size: 32px; line-height: 36px; color: #bdc3c7; }
.card {
  width: 1080px;
  height: 204px;
  margin: 100px auto 0;
  padding: 80px 0 40px;
  border-radius: 20px;
  background: #fff;
  box-shadow: 8px 10px 30px rgba(0, 0, 0, .2);
}
.task-row { display: flex; align-items: center; justify-content: center; gap: 20px; }
.task-row input {
  width: 404px;
  height: 84px;
  padding: 0 20px;
  border: 2px solid #ccc;
  border-radius: 10px;
  background: #f9f9f9;
  font: 32px "Liberation Sans", Arial, sans-serif;
}
.task-row input::placeholder { color: #808080; }
.task-row button {
  width: 80px;
  height: 80px;
  padding: 0 0 7px;
  border: 0;
  border-radius: 50%;
  background: #a084dc;
  color: #fff;
  font: 500 37px Inter, sans-serif;
}
.credit {
  height: 107px;
  margin-top: auto;
  padding-left: 60px;
  display: flex;
  align-items: center;
  justify-content: center;
  background: #f1f1f1;
  box-shadow: 0 -4px 20px rgba(0, 0, 0, .1);
  color: #0a2048;
  font-size: 36px;
}
.credit p { margin: 0; white-space: nowrap; }
.credit svg { display: inline-block; vertical-align: -4px; }

/* Dock */
.dock-area { position: relative; flex: 1; padding: 8px 96px 0; }
.dock {
  height: 136px;
  padding: 18px 0 0 18px;
  display: flex;
  gap: 28.5px;
  border: 2px solid #333;
  border-radius: 46px;
  background: #111;
  box-shadow: 0 0 130px rgba(0, 0, 0, .24);
}
.app { position: relative; width: 86px; height: 86px; flex: none; }
.app svg { width: 86px; height: 86px; }
.app-phone { margin-left: 1px; }
.running::after {
  content: "";
  position: absolute;
  left: 38px;
  top: 104px;
  width: 8px;
  height: 8px;
  border-radius: 50%;
  background: #949494;
}
.petals rect { mix-blend-mode: multiply; opacity: .92; }
.cal-month { font: 700 17px Inter, sans-serif; fill: #fff; text-anchor: middle; }
.cal-day { font: 300 53px Inter, sans-serif; fill: #1c1c1c; text-anchor: middle; letter-spacing: -3px; }
.tv-text { font: 600 36px Inter, sans-serif; fill: #fff; letter-spacing: -1px; }
.term-text { font: 700 21px "Liberation Mono", monospace; fill: #fff; }
.dock-sep { width: 2px; height: 100px; margin-top: -2px; background: #444; }
.sep-1 { margin-left: 11px; margin-right: 9px; }
.sep-2 { margin-left: 11px; margin-right: 15px; }
.trash { margin-top: -3px; }
```
